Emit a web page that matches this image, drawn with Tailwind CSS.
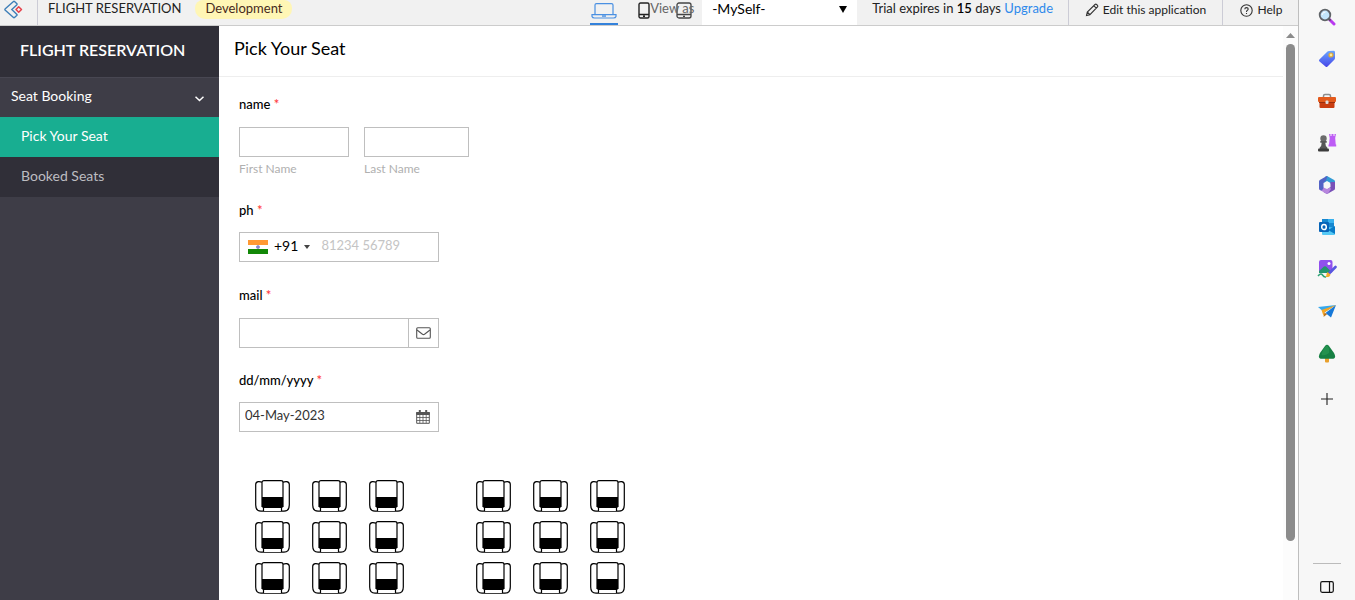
<!DOCTYPE html>
<html lang="en">
<head>
<meta charset="utf-8">
<meta name="viewport" content="width=device-width, initial-scale=1">
<title>Flight Reservation - Pick Your Seat</title>
<script src="https://cdn.jsdelivr.net/npm/@tailwindcss/browser@4"></script>
</head>
<body class="h-screen flex overflow-hidden bg-white font-['Lato',sans-serif] text-[13px] text-[#222]">
<svg class="hidden" aria-hidden="true">
  <symbol id="seat" viewBox="0 0 35 32">
    <g fill="#fff" stroke="#000" stroke-width="1.2">
      <path d="M7 2.2Q5.500 1.500 3.500 1.600Q.7 1.800.7 4.500V25Q.7 31.200 6 31.200H29Q34.300 31.200 34.300 25V4.500Q34.300 1.800 31.500 1.600Q29.500 1.500 28 2.200"/>
      <path d="M7 27V2.500Q7 .7 9 .7H26Q28 .7 28 2.500V27"/>
      <path d="M8.500 31V27.500H26.500V31"/>
    </g>
    <path d="M7 17H28V27.500H7Z"/>
  </symbol>
</svg>

<div class="flex-1 min-w-0 flex flex-col">
  <header class="h-[26px] shrink-0 flex bg-[#f1f1f1] border-b border-[#ccc] overflow-hidden whitespace-nowrap">
    <a href="#" aria-label="Creator home" class="w-[38px] border-r border-[#ccccd6] pl-1">
      <svg width="19" height="19" viewBox="0 0 19 19" fill="none">
        <path d="M12.700 3.500L10.800 1.700Q10 1 9.200 1.700L1.300 8.700Q.5 9.500 1.300 10.300L9.200 17.300Q10 18 10.800 17.300L12.700 15.600Q13.400 14.900 12.700 14.200L7.800 9.500L12.700 4.900Q13.400 4.200 12.700 3.500Z" stroke="#3e7fb8" stroke-width="1.400"/>
        <path d="M14.700 6.800L17.500 9.500L14.700 12.200L12 9.500Z" stroke="#e5404a" stroke-width="1.500" stroke-linejoin="round"/>
      </svg>
    </a>
    <span class="ml-2.5 leading-4">FLIGHT RESERVATION</span>
    <span class="ml-3.5 h-[19px] px-2.5 rounded-b-[10px] rounded-t-[8px] bg-[#fff6b5] leading-4 text-[#47291c]">Development</span>

    <div class="ml-auto flex relative">
      <button aria-label="Desktop view" class="w-7 h-[25px] border-b-2 border-[#3482db] flex justify-center">
        <svg class="mt-[3px]" width="26" height="16" viewBox="0 0 26 16" fill="none" stroke="#4a90e2" stroke-width="1.200">
          <path d="M4 11.500V2Q4 .7 5.500.7H20.500Q22 .7 22 2V11.500M1 11.700H25V13.500Q24.500 15 22.500 15H3.500Q1.500 15 1 13.500ZM11 13.200H15"/>
        </svg>
      </button>
      <button aria-label="Phone view" class="ml-5 w-3 h-[25px] flex">
        <svg class="mt-[2px]" width="12" height="17" viewBox="0 0 12 17" fill="none" stroke="#222" stroke-width="1.400"><rect x="1" y="1" width="10" height="15" rx="1.500"/><path d="M1 12.500H11M5 14.300H7"/></svg>
      </button>
      <button aria-label="Tablet view" class="ml-[26px] w-4 h-[25px] flex">
        <svg class="mt-[2px]" width="16" height="17" viewBox="0 0 16 17" fill="none" stroke="#444" stroke-width="1.300"><rect x="1" y="1" width="14" height="15" rx="2"/><path d="M1 12.500H15M7 14.300H9"/></svg>
      </button>
      <label for="viewas" class="absolute left-[60px] top-0 leading-4 text-[#666]">View as</label>
      <div class="relative ml-2.5 w-[155px] bg-white">
        <select id="viewas" class="appearance-none w-full h-[18px] pl-2.5 text-[14px] leading-[18px] bg-white text-black"><option>-MySelf-</option></select>
        <svg class="absolute right-2.5 top-1.5 pointer-events-none" width="8" height="7" viewBox="0 0 8 7"><path d="M0 0H8L4 7Z"/></svg>
      </div>
      <p class="px-[15px] leading-4">Trial expires in <span class="font-semibold text-black">15</span> days <a href="#" class="text-[#2f8aeb]">Upgrade</a></p>
      <button class="border-l border-[#ccccd6] w-[154px] h-[25px] pb-[5px] flex items-center justify-center gap-1 text-[12px]">
        <svg width="14" height="14" viewBox="0 0 14 14" fill="none" stroke="#333" stroke-width="1.100"><path d="M1.500 12.500L2.300 9L10 1.500Q10.800.8 11.600 1.500L12.500 2.400Q13.200 3.200 12.500 4L4.900 11.700ZM8.700 2.700L11.300 5.200M2.300 9L4.900 11.700"/></svg>
        <span>Edit this application</span>
      </button>
      <button class="border-l border-[#ccccd6] w-[76px] h-[25px] pb-[5px] pl-px flex items-center justify-center gap-[5px] text-[12px]">
        <svg width="13" height="13" viewBox="0 0 13 13" fill="none" stroke="#333" stroke-width="1.100"><circle cx="6.500" cy="6.500" r="5.700"/><path d="M4.800 5.200Q4.800 3.600 6.500 3.600T8.200 5.100Q8.200 6 7.200 6.500Q6.500 6.900 6.500 7.900M6.500 9V10"/></svg>
        <span>Help</span>
      </button>
    </div>
  </header>

  <div class="flex-1 min-h-0 flex">
    <aside class="w-[219px] shrink-0 bg-[#3e3d47]">
      <h1 class="h-[52px] pl-5 pb-[3px] flex items-center bg-[#302f38] border-b border-[#484752] text-[16px] font-semibold text-white">FLIGHT RESERVATION</h1>
      <nav class="text-[14px]">
        <button class="w-full h-[39px] pl-[11px] pr-[15px] pb-1 flex items-center justify-between text-white">
          <span>Seat Booking</span>
          <svg class="mt-1.5" width="9" height="6" viewBox="0 0 9 6" fill="none" stroke="#fff" stroke-width="1.500"><path d="M.5.700L4.500 4.500L8.500.700"/></svg>
        </button>
        <a href="#" class="h-10 pl-[21px] pb-1 flex items-center bg-[#18ae91] text-white">Pick Your Seat</a>
        <a href="#" class="h-10 pl-[21px] pb-1 flex items-center bg-[#302f38] text-[#bdbdc1]">Booked Seats</a>
      </nav>
    </aside>

    <main class="flex-1 min-w-0 overflow-hidden">
      <h2 class="h-[51px] pl-[15px] pb-1.5 flex items-center border-b border-[#eee] text-[18px] text-black">Pick Your Seat</h2>
      <form class="pl-5 pt-[17px]">
        <fieldset>
          <legend class="leading-5 mb-[13px] font-medium text-black">name <span class="text-[#f33]">*</span></legend>
          <div class="flex gap-[15px] text-[12px] text-[#b0b0b0]">
            <div class="w-[110px]"><input id="first" class="block w-full h-[30px] px-1.5 border border-[#bfbfbf] text-[#333]"><label for="first" class="block mt-0.5 leading-5">First Name</label></div>
            <div class="w-[105px]"><input id="last" class="block w-full h-[30px] px-1.5 border border-[#bfbfbf] text-[#333]"><label for="last" class="block mt-0.5 leading-5">Last Name</label></div>
          </div>
        </fieldset>

        <label for="ph" class="block mt-[21px] mb-3 leading-5 font-medium text-black">ph <span class="text-[#f33]">*</span></label>
        <div class="w-[200px] h-[30px] pl-2 flex items-center border border-[#bfbfbf]">
          <button type="button" aria-label="Country code India +91" class="flex items-center pb-[3px] text-[14px] text-black">
            <svg class="mt-[3px]" width="20" height="14" viewBox="0 0 20 14"><path fill="#f93" d="M0 0H20V5H0Z"/><path fill="#fff" d="M0 5H20V9H0Z"/><path fill="#128807" d="M0 9H20V14H0Z"/><circle cx="10" cy="7" r="1.600" fill="#8a8ad0" stroke="#55a" stroke-width=".4"/></svg>
            <span class="ml-1.5">+91</span>
            <svg class="ml-1.5 mt-[3px]" width="6" height="4" viewBox="0 0 6 4"><path fill="#444" d="M0 0H6L3 4Z"/></svg>
          </button>
          <input id="ph" type="tel" placeholder="81234 56789" class="ml-[11px] min-w-0 flex-1 h-full pb-[5px] text-[13px] placeholder:text-[#c4c4c4]">
        </div>

        <label for="mail" class="block mt-[23px] mb-[13px] leading-5 font-medium text-black">mail <span class="text-[#f33]">*</span></label>
        <div class="w-[200px] h-[30px] flex border border-[#bfbfbf]">
          <input id="mail" type="email" class="flex-1 min-w-0 px-1.5">
          <span class="w-[30px] border-l border-[#bfbfbf] flex items-center justify-center">
            <svg width="15" height="12" viewBox="0 0 15 12" fill="none" stroke="#555" stroke-width="1.100"><rect x=".7" y=".7" width="13.600" height="10.600" rx="1"/><path d="M1 3L6.500 7.300Q7.500 8 8.500 7.300L14 3"/></svg>
          </span>
        </div>

        <label for="date" class="block mt-[22px] mb-3 leading-5 font-medium text-black">dd/mm/yyyy <span class="text-[#f33]">*</span></label>
        <div class="w-[200px] h-[30px] flex border border-[#bfbfbf]">
          <input id="date" value="04-May-2023" class="flex-1 min-w-0 pl-[5px] pb-[3px] text-[#333]">
          <button type="button" aria-label="Choose date" class="w-[30px] flex items-center justify-center">
            <svg class="mr-px" width="14" height="14" viewBox="0 0 14 14" fill="none" stroke="#555"><path d="M.7 2.500H13.300V13.300H.7Z"/><path fill="#555" d="M.7 2.500H13.300V4.500H.7Z"/><path d="M.7 7.500H13.300M.7 10.500H13.300M3.800 5V13M7 5V13M10.200 5V13" stroke-width=".8"/><path d="M3.800 0V3.500M10.200 0V3.500" stroke-width="2"/></svg>
          </button>
        </div>

        <div class="mt-12 ml-4 flex gap-[72px]">
          <div class="grid grid-cols-[repeat(3,35px)] gap-x-[22px] gap-y-[9px]">
            <button type="button" aria-label="Seat A1"><svg class="w-full h-8"><use href="#seat"/></svg></button>
            <button type="button" aria-label="Seat A2"><svg class="w-full h-8"><use href="#seat"/></svg></button>
            <button type="button" aria-label="Seat A3"><svg class="w-full h-8"><use href="#seat"/></svg></button>
            <button type="button" aria-label="Seat B1"><svg class="w-full h-8"><use href="#seat"/></svg></button>
            <button type="button" aria-label="Seat B2"><svg class="w-full h-8"><use href="#seat"/></svg></button>
            <button type="button" aria-label="Seat B3"><svg class="w-full h-8"><use href="#seat"/></svg></button>
            <button type="button" aria-label="Seat C1"><svg class="w-full h-8"><use href="#seat"/></svg></button>
            <button type="button" aria-label="Seat C2"><svg class="w-full h-8"><use href="#seat"/></svg></button>
            <button type="button" aria-label="Seat C3"><svg class="w-full h-8"><use href="#seat"/></svg></button>
          </div>
          <div class="grid grid-cols-[repeat(3,35px)] gap-x-[22px] gap-y-[9px]">
            <button type="button" aria-label="Seat A4"><svg class="w-full h-8"><use href="#seat"/></svg></button>
            <button type="button" aria-label="Seat A5"><svg class="w-full h-8"><use href="#seat"/></svg></button>
            <button type="button" aria-label="Seat A6"><svg class="w-full h-8"><use href="#seat"/></svg></button>
            <button type="button" aria-label="Seat B4"><svg class="w-full h-8"><use href="#seat"/></svg></button>
            <button type="button" aria-label="Seat B5"><svg class="w-full h-8"><use href="#seat"/></svg></button>
            <button type="button" aria-label="Seat B6"><svg class="w-full h-8"><use href="#seat"/></svg></button>
            <button type="button" aria-label="Seat C4"><svg class="w-full h-8"><use href="#seat"/></svg></button>
            <button type="button" aria-label="Seat C5"><svg class="w-full h-8"><use href="#seat"/></svg></button>
            <button type="button" aria-label="Seat C6"><svg class="w-full h-8"><use href="#seat"/></svg></button>
          </div>
        </div>
      </form>
    </main>

    <!-- scroll track -->
    <div class="w-[15px] shrink-0 flex flex-col items-center bg-[#fcfcfc] pt-[7px]">
      <svg class="shrink-0" width="9" height="5" viewBox="0 0 9 5"><path fill="#8b8b8b" d="M0 5L4.500 0L9 5Z"/></svg>
      <div class="mt-1.5 w-[9px] h-[89%] mb-auto max-h-[497px] rounded-full bg-[#8b8b8b]"></div>
    </div>
  </div>
</div>

<aside aria-label="Browser sidebar" class="w-[57px] shrink-0 flex flex-col items-center border-l border-[#bebebe] bg-[#f7f7f7] pt-px">
  <div class="flex flex-col gap-2.5">
    <button aria-label="Search" class="size-8 grid place-items-center">
      <svg width="18" height="18" viewBox="0 0 18 18"><path d="M11 11L16 16" stroke="#b939f0" stroke-width="3" stroke-linecap="round"/><path d="M10.500 10.500L12.500 12.500" stroke="#555" stroke-width="2"/><circle cx="7" cy="7" r="5.300" fill="#c3e6fa" stroke="#606468" stroke-width="1.800"/><path d="M4 7Q4.500 4 7.500 4" stroke="#fff" fill="none"/></svg>
    </button>
    <button aria-label="Shopping" class="size-8 grid place-items-center">
      <svg width="18" height="18" viewBox="0 0 18 18"><defs><linearGradient id="tag" x2="0" y2="1"><stop stop-color="#6aa5ff"/><stop offset="1" stop-color="#4646e8"/></linearGradient></defs><path fill="url(#tag)" d="M9.500 1.500Q10 1 11 1L15.500.8Q17 .8 17 2.200V8Q17 9 16.300 9.700L9.500 16.400Q8.500 17.400 7.500 16.400L1.500 11.500Q.4 10.500 1.400 9.500Z"/><circle cx="13" cy="5" r="2" fill="#f7e7a0" stroke="#e2a92c" stroke-width="1.200"/></svg>
    </button>
    <button aria-label="Tools" class="size-8 grid place-items-center">
      <svg width="18" height="16" viewBox="0 0 18 16"><path d="M5.500 5V3Q5.500 1.500 7 1.500H11Q12.500 1.500 12.500 3V5" fill="none" stroke="#8c8c8c" stroke-width="1.500"/><path fill="#c93d10" d="M1.500 7H16.500V14Q16.500 15 15.500 15H2.500Q1.500 15 1.500 14Z"/><rect y="4" width="18" height="5" rx="1" fill="#e35a1c"/><path d="M1 9.500H17" stroke="#9a2e0c"/><rect x="7.500" y="7.500" width="3" height="3.500" rx="1" fill="#ddd"/></svg>
    </button>
    <button aria-label="Games" class="size-8 grid place-items-center">
      <svg width="20" height="20" viewBox="0 0 20 20"><path fill="#bd5cf5" d="M12 1H13.500V3H14.500V1H16.500V3H17.500V1H19L18.200 5L18.700 11.500H19.200V13.500H11.500V11.500H12L12.700 5Z"/><circle cx="6.500" cy="5.500" r="3.200" fill="#6b6b6b"/><path fill="#575757" d="M3.300 8H9.700V9.700H8.300Q8.300 13 10.300 14.500V16H2.700V14.500Q4.700 13 4.700 9.700H3.300Z"/><rect x="1" y="15.500" width="11" height="3" rx="1" fill="#3c3c3c"/></svg>
    </button>
    <button aria-label="Microsoft 365" class="size-8 grid place-items-center">
      <svg width="18" height="18" viewBox="0 0 18 18"><path fill="#329bd5" d="M9 0L16.200 4Q17 4.500 17 5.500V10L12.500 8V7L9 5L5.500 7L7 1Q8 0 9 0Z"/><path fill="#7951b8" d="M17 6V12.500Q17 13.500 16.200 14L10 17.500Q9 18 8 17.500L5.500 16L12.500 11V6Z"/><path fill="#b786de" d="M9 18L1.800 14Q1 13.500 1 12.500V10L5.500 11.500L9 13L12 11.500L13 13L10 17.500Z"/><path fill="#5363c5" d="M1 12V5.500Q1 4.500 1.800 4L8 .4L9.500 0L8 4.500L5.500 7V12L4 14.500Q1 14 1 12Z"/></svg>
    </button>
    <button aria-label="Outlook" class="size-8 grid place-items-center">
      <svg width="18" height="18" viewBox="0 0 18 18"><rect x="4" y="1" width="12" height="9" fill="#1687d0"/><path fill="#38b1ee" d="M10 1H16V5H10Z"/><path fill="#55c9f5" d="M4 8L17 10V16Q17 17 16 17H5Q4 17 4 16Z"/><path fill="#087ac7" d="M17 8V16L10 12Z"/><rect x="1" y="4" width="10" height="10" rx="1" fill="#0764b8"/><ellipse cx="6" cy="9" rx="2.300" ry="2.600" fill="none" stroke="#fff" stroke-width="1.500"/></svg>
    </button>
    <button aria-label="Image creator" class="size-8 grid place-items-center">
      <svg width="20" height="20" viewBox="0 0 20 20"><rect x="2" y="1" width="13.500" height="13" rx="2" fill="#9150ee"/><circle cx="12" cy="4.500" r="1.500" fill="#fff"/><path fill="#23966e" d="M2 12L7 7.500Q8 6.800 9 7.500L14 12.500V14H2Z"/><path d="M1 17Q4 13.500 5.500 16T9 18" fill="none" stroke="#2ba374" stroke-width="1.500"/><path d="M12 14.500L18.500 8" stroke="#5857df" stroke-width="2.600" stroke-linecap="round"/><path fill="#f3ad2b" d="M10.500 13L13.500 15.500Q13 18.500 8.500 18Q9.500 17 9.500 15Z"/></svg>
    </button>
    <button aria-label="Drop" class="size-8 grid place-items-center">
      <svg width="18" height="14" viewBox="0 0 18 14"><path fill="#36a8ed" d="M0 3L18 1L7 8L3.500 6Z"/><path fill="#1678d8" d="M18 1L13 13.500L7.500 9Z"/><path fill="#f6a623" d="M3.500 6L18 1L6.500 8.500L5.500 12Z"/><path fill="#b86d13" d="M6.500 8.500L9 10.300L5.500 13Z"/></svg>
    </button>
    <button aria-label="Tree" class="size-8 grid place-items-center">
      <svg width="18" height="19" viewBox="0 0 18 19"><rect x="7" y="13" width="4" height="5.500" rx="1" fill="#e8a02c"/><path fill="#168043" d="M9 .8Q10 .8 11 2L16 9Q19 14.500 14 14.800H4Q-1 14.500 2 9L7 2Q8 .8 9 .8Z"/><path fill="#2d9c57" opacity=".6" d="M9 1Q4 6 3.500 11Q7 12 11 9Q12 5 9 1Z"/></svg>
    </button>
    <button aria-label="Customize" class="size-8 mt-1 grid place-items-center">
      <svg width="12" height="12" viewBox="0 0 12 12" stroke="#222" stroke-width="1.100"><path d="M6 0V12M0 6H12"/></svg>
    </button>
  </div>
  <div class="mt-auto w-7 h-[37px] border-t border-[#bbb] flex justify-center pt-[17px]">
    <button aria-label="Toggle sidebar" class="w-3.5 h-3">
      <svg width="14" height="12" viewBox="0 0 14 12" fill="none" stroke="#111" stroke-width="1.200"><rect x=".7" y=".7" width="12.600" height="10.600" rx="1.500"/><path d="M9.500 1V11"/></svg>
    </button>
  </div>
</aside>
</body>
</html>
